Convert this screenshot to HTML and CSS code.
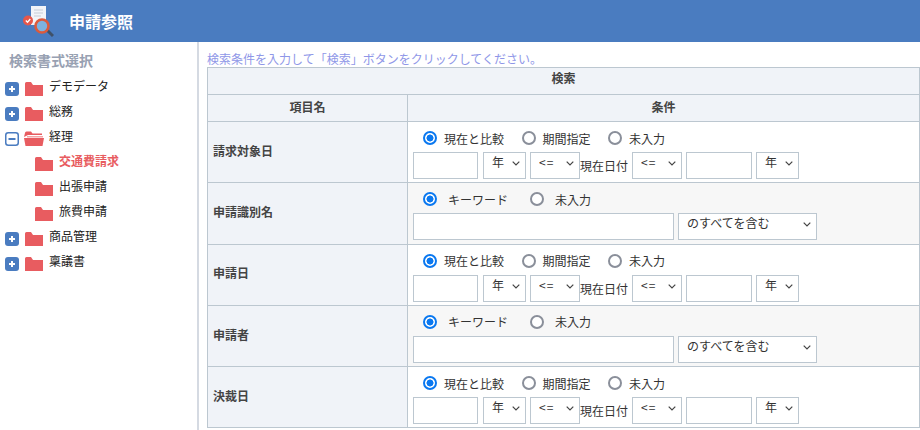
FILE: index.html
```html
<!DOCTYPE html>
<html lang="ja">
<head>
<meta charset="utf-8">
<title>申請参照</title>
<link rel="stylesheet" href="styles.css">
</head>
<body>
<svg class="defs" width="0" height="0" aria-hidden="true">
  <symbol id="folder" viewBox="0 0 18 14"><path d="M0 1.500Q0 0 1.500 0H6L8 3H18V14H0Z" fill="#e85c60"/></symbol>
  <symbol id="folder-open" viewBox="0 0 20 15"><path d="M1 2Q1 .5 2.500 .5H7L8.500 2.500H18V4H4L0 6Z" fill="#e85c60"/><path d="M3 5H19V6.500H3Z" fill="#f3a5a7"/><path d="M0 7H20L18.500 15H1.500Z" fill="#e85c60"/></symbol>
  <symbol id="plus" viewBox="0 0 14 14"><rect width="14" height="14" rx="3" fill="#4a7cc0"/><path d="M4 7H10M7 4V10" stroke="#fff" stroke-width="2"/></symbol>
  <symbol id="minus" viewBox="0 0 14 14"><rect x=".75" y=".75" width="12.500" height="12.500" rx="2.500" fill="#fff" stroke="#4a7cc0" stroke-width="1.500"/><path d="M3.500 7H10.500" stroke="#4a7cc0" stroke-width="2"/></symbol>
</svg>
<header class="topbar">
  <svg class="logo" width="32" height="36" viewBox="0 0 32 36">
    <path d="M9 3H24V22H9Z" fill="#f2f4f8"/>
    <path d="M12 7H21M12 10H21M12 13H19" stroke="#c5cbd6" stroke-width="1.200"/>
    <circle cx="6" cy="17.500" r="5" fill="#e6574b"/>
    <path d="M3.800 17.500L5.500 19.200L8.300 16" fill="none" stroke="#fff" stroke-width="1.300"/>
    <path d="M25 27L31 33" stroke="#3f5168" stroke-width="3"/>
    <circle cx="20" cy="23" r="6.500" fill="#7db2df" stroke="#dc5a3c" stroke-width="2.600"/>
  </svg>
  <h1 class="title">申請参照</h1>
</header>
<div class="main">
  <aside class="sidebar">
    <h2 class="side-title">検索書式選択</h2>
    <ul class="tree">
      <li class="node"><svg class="toggle"><use href="#plus"/></svg><svg class="fold"><use href="#folder"/></svg><span>デモデータ</span></li>
      <li class="node"><svg class="toggle"><use href="#plus"/></svg><svg class="fold"><use href="#folder"/></svg><span>総務</span></li>
      <li class="node"><svg class="toggle"><use href="#minus"/></svg><svg class="fold-open"><use href="#folder-open"/></svg><span>経理</span></li>
      <li class="node child active"><svg class="fold"><use href="#folder"/></svg><span>交通費請求</span></li>
      <li class="node child"><svg class="fold"><use href="#folder"/></svg><span>出張申請</span></li>
      <li class="node child"><svg class="fold"><use href="#folder"/></svg><span>旅費申請</span></li>
      <li class="node"><svg class="toggle"><use href="#plus"/></svg><svg class="fold"><use href="#folder"/></svg><span>商品管理</span></li>
      <li class="node"><svg class="toggle"><use href="#plus"/></svg><svg class="fold"><use href="#folder"/></svg><span>稟議書</span></li>
    </ul>
  </aside>
  <section class="content">
    <p class="hint">検索条件を入力して「検索」ボタンをクリックしてください。</p>
    <table class="search">
      <colgroup><col class="col-name"><col></colgroup>
      <tr><th colspan="2" class="head head-top">検索</th></tr>
      <tr><th class="head">項目名</th><th class="head">条件</th></tr>
      <tr>
        <th class="label">請求対象日</th>
        <td class="cell">
          <div class="radios"><label class="r"><input type="radio" name="a" checked>現在と比較</label><label class="r"><input type="radio" name="a">期間指定</label><label class="r"><input type="radio" name="a">未入力</label></div>
          <div class="inputs"><input class="date" type="text"><select class="unit"><option>年</option></select><select class="op"><option>&lt;=</option></select><span class="now">現在日付</span><select class="op"><option>&lt;=</option></select><input class="date" type="text"><select class="unit"><option>年</option></select></div>
        </td>
      </tr>
      <tr class="alt">
        <th class="label">申請識別名</th>
        <td class="cell">
          <div class="radios kw"><label class="r"><input type="radio" name="b" checked>キーワード</label><label class="r"><input type="radio" name="b">未入力</label></div>
          <div class="inputs wide"><input class="kwbox" type="text"><select class="match"><option>のすべてを含む</option></select></div>
        </td>
      </tr>
      <tr>
        <th class="label">申請日</th>
        <td class="cell">
          <div class="radios"><label class="r"><input type="radio" name="c" checked>現在と比較</label><label class="r"><input type="radio" name="c">期間指定</label><label class="r"><input type="radio" name="c">未入力</label></div>
          <div class="inputs"><input class="date" type="text"><select class="unit"><option>年</option></select><select class="op"><option>&lt;=</option></select><span class="now">現在日付</span><select class="op"><option>&lt;=</option></select><input class="date" type="text"><select class="unit"><option>年</option></select></div>
        </td>
      </tr>
      <tr class="alt">
        <th class="label">申請者</th>
        <td class="cell">
          <div class="radios kw"><label class="r"><input type="radio" name="d" checked>キーワード</label><label class="r"><input type="radio" name="d">未入力</label></div>
          <div class="inputs wide"><input class="kwbox" type="text"><select class="match"><option>のすべてを含む</option></select></div>
        </td>
      </tr>
      <tr>
        <th class="label">決裁日</th>
        <td class="cell">
          <div class="radios"><label class="r"><input type="radio" name="e" checked>現在と比較</label><label class="r"><input type="radio" name="e">期間指定</label><label class="r"><input type="radio" name="e">未入力</label></div>
          <div class="inputs"><input class="date" type="text"><select class="unit"><option>年</option></select><select class="op"><option>&lt;=</option></select><span class="now">現在日付</span><select class="op"><option>&lt;=</option></select><input class="date" type="text"><select class="unit"><option>年</option></select></div>
        </td>
      </tr>
    </table>
  </section>
</div>
</body>
</html>
```

FILE: styles.css
```css
* { box-sizing: border-box; }
html, body { margin: 0; height: 430px; overflow: hidden; background: #fff; }
body { font-family: "Noto Sans CJK JP", "Liberation Sans", sans-serif; font-size: 12px; color: #333; }
.defs { position: absolute; }
.topbar { height: 42px; background: #4a7cc0; display: flex; align-items: center; padding-left: 22px; }
.title { margin: 0 0 0 15px; font-size: 16px; line-height: 20px; font-weight: 700; color: #fff; }
.main { display: flex; height: 388px; }
.sidebar { width: 199px; flex: none; border-right: 2px solid #d5dae2; padding: 8px 0 0 5px; }
.side-title { margin: 0 0 0 4px; font-size: 14px; line-height: 20px; font-weight: 700; color: #98a1b2; }
.tree { list-style: none; margin: 6px 0 0; padding: 0; }
.node { height: 25px; display: flex; align-items: center; color: #222; font-size: 12px; }
.node span { padding-bottom: 7px; }
.toggle { width: 14px; height: 14px; margin-right: 6px; }
.fold { width: 18px; height: 14px; margin-right: 6px; }
.fold-open { width: 20px; height: 15px; margin-right: 5px; margin-left: -1px; }
.child { padding-left: 30px; }
.active { color: #e85c60; font-weight: 700; }
.content { flex: 1; min-width: 0; padding: 8px 0 0 8px; }
.hint { margin: 0; line-height: 17px; color: #8f97e8; font-size: 12px; }
.search { width: 713px; border-collapse: collapse; table-layout: fixed; }
.search th, .search td { border: 1px solid #bcc7d0; }
.col-name { width: 200px; }
.head { height: 27px; padding: 0 0 3px; background: #f0f3f8; font-size: 12px; font-weight: 700; color: #444; text-align: center; }
.head-top { padding-bottom: 7px; }
.label { background: #f0f3f8; text-align: left; padding: 0 0 4px 5px; font-size: 12px; font-weight: 700; color: #444; }
.cell { height: 61.300px; padding: 0 0 0 5px; background: #fff; vertical-align: top; }
.alt .cell { background: #f7f7f7; }
.radios { display: flex; height: 30px; padding-top: 2px; align-items: center; padding-left: 10px; font-size: 12px; color: #333; }
.r { display: flex; align-items: center; margin-right: 17.500px; }
.r input { appearance: none; width: 14px; height: 14px; margin: 0 7px 0 0; border: 2px solid #8a8f9a; border-radius: 50%; background: #fff; }
.r input:checked { border-color: #0a78f0; background: radial-gradient(circle, #0a78f0 0 3.200px, #fff 3.800px); }
.kw .r { margin-right: 22px; }
.kw .r input { margin-right: 11px; }
.inputs { display: flex; align-items: center; font-size: 12px; }
.inputs input, .inputs select { height: 27px; margin: 0; border: 1px solid #bcc7d0; border-radius: 0; background-color: #fff; font-family: inherit; font-size: 12px; color: #333; padding: 0 4px; }
.inputs select { appearance: none; padding: 0 14px 10px 8px; background-image: url("data:image/svg+xml,%3Csvg xmlns='http://www.w3.org/2000/svg' width='8' height='5'%3E%3Cpath d='M.7 .7L4 4L7.300 .7' fill='none' stroke='%23444' stroke-width='1.200'/%3E%3C/svg%3E"); background-repeat: no-repeat; background-position: right 5px top 8px; }
.date { width: 65px; margin-right: 5px !important; }
.unit { width: 43px; margin-right: 4px !important; }
.op { width: 50px; letter-spacing: 1px; }
.now { white-space: nowrap; }
.now + .op { margin: 0 4px !important; }
.now + .op + .date { width: 66px; margin-right: 4px !important; }
.kwbox { width: 261px; margin-right: 4px !important; }
.match { width: 139px; }
```
